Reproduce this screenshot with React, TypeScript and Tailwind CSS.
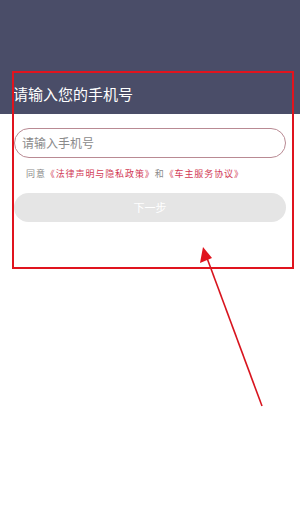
import React from "react";

const App: React.FC = () => {
	return (
		<div
			className="relative w-[300px] h-[515px] bg-white overflow-hidden"
			style={{ fontFamily: '"Noto Sans CJK SC", "Noto Sans", sans-serif' }}
		>
			<header className="h-[114px] bg-[#4a4d68] flex items-end px-[13px] pb-[9px]">
				<h1 className="text-white text-[15px] leading-[22px]">请输入您的手机号</h1>
			</header>
			<main className="px-[14px] pt-[14px]">
				<div className="h-[30px] rounded-full border border-[#b98a93] flex items-center px-[7px]">
					<input
						type="text"
						placeholder="请输入手机号"
						className="w-full bg-transparent outline-none text-[12px] text-gray-700 placeholder:text-[#8a8a8a]"
					/>
				</div>
				<p className="mt-[9px] pl-[12px] text-[9px] leading-[14px] tracking-[0.9px] text-[#8a8a8a]">
					同意<span className="text-[#d23a55]">《法律声明与隐私政策》</span>和
					<span className="text-[#d23a55]">《车主服务协议》</span>
				</p>
				<button className="mt-[12px] w-full h-[29px] rounded-full bg-[#e5e5e5] text-white text-[11px]">
					下一步
				</button>
			</main>

			{/* annotation overlay */}
			<div className="absolute left-[12px] top-[71px] w-[282px] h-[198px] border-2 border-[#e0141e] pointer-events-none" />
			<svg className="absolute left-0 top-0 pointer-events-none" width="300" height="515">
				<line x1="262" y1="406" x2="207" y2="258" stroke="#d8141e" strokeWidth="1.6" />
				<polygon points="203,247 200,263 212,258" fill="#e0141e" />
			</svg>
		</div>
	);
};

export default App;
